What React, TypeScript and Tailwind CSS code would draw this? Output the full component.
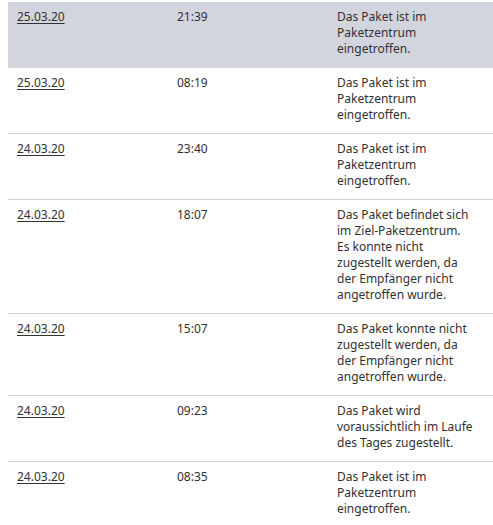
const rows = [
  { date: "25.03.20", time: "21:39", text: "Das Paket ist im Paketzentrum eingetroffen.", active: true },
  { date: "25.03.20", time: "08:19", text: "Das Paket ist im Paketzentrum eingetroffen." },
  { date: "24.03.20", time: "23:40", text: "Das Paket ist im Paketzentrum eingetroffen." },
  {
    date: "24.03.20",
    time: "18:07",
    text: "Das Paket befindet sich im Ziel-Paketzentrum. Es konnte nicht zugestellt werden, da der Empfänger nicht angetroffen wurde.",
  },
  { date: "24.03.20", time: "15:07", text: "Das Paket konnte nicht zugestellt werden, da der Empfänger nicht angetroffen wurde." },
  { date: "24.03.20", time: "09:23", text: "Das Paket wird voraussichtlich im Laufe des Tages zugestellt." },
  { date: "24.03.20", time: "08:35", text: "Das Paket ist im Paketzentrum eingetroffen." },
];

export default function App() {
  return (
    <div className="min-h-[525px] bg-white pt-[2px] pl-[8px] font-['Noto_Sans',sans-serif] text-[12px] leading-[16px] text-[#323232]">
      {rows.map((r, i) => (
        <div
          key={i}
          className={
            r.active
              ? "grid grid-cols-[160px_160px_160px_1fr] bg-[#d2d5de] pt-[7px] pb-[10px] border-b border-[#d2d5de]"
              : "grid grid-cols-[160px_160px_160px_1fr] pt-[7px] pb-[10px] border-b border-[#cfcfcf]"
          }
        >
          <div className="px-[9px]">
            <a href="#" className="underline underline-offset-2 decoration-1">
              {r.date}
            </a>
          </div>
          <div className="px-[9px]">{r.time}</div>
          <div className="pl-[9px] pr-[15px]">{r.text}</div>
          <div />
        </div>
      ))}
    </div>
  );
}
